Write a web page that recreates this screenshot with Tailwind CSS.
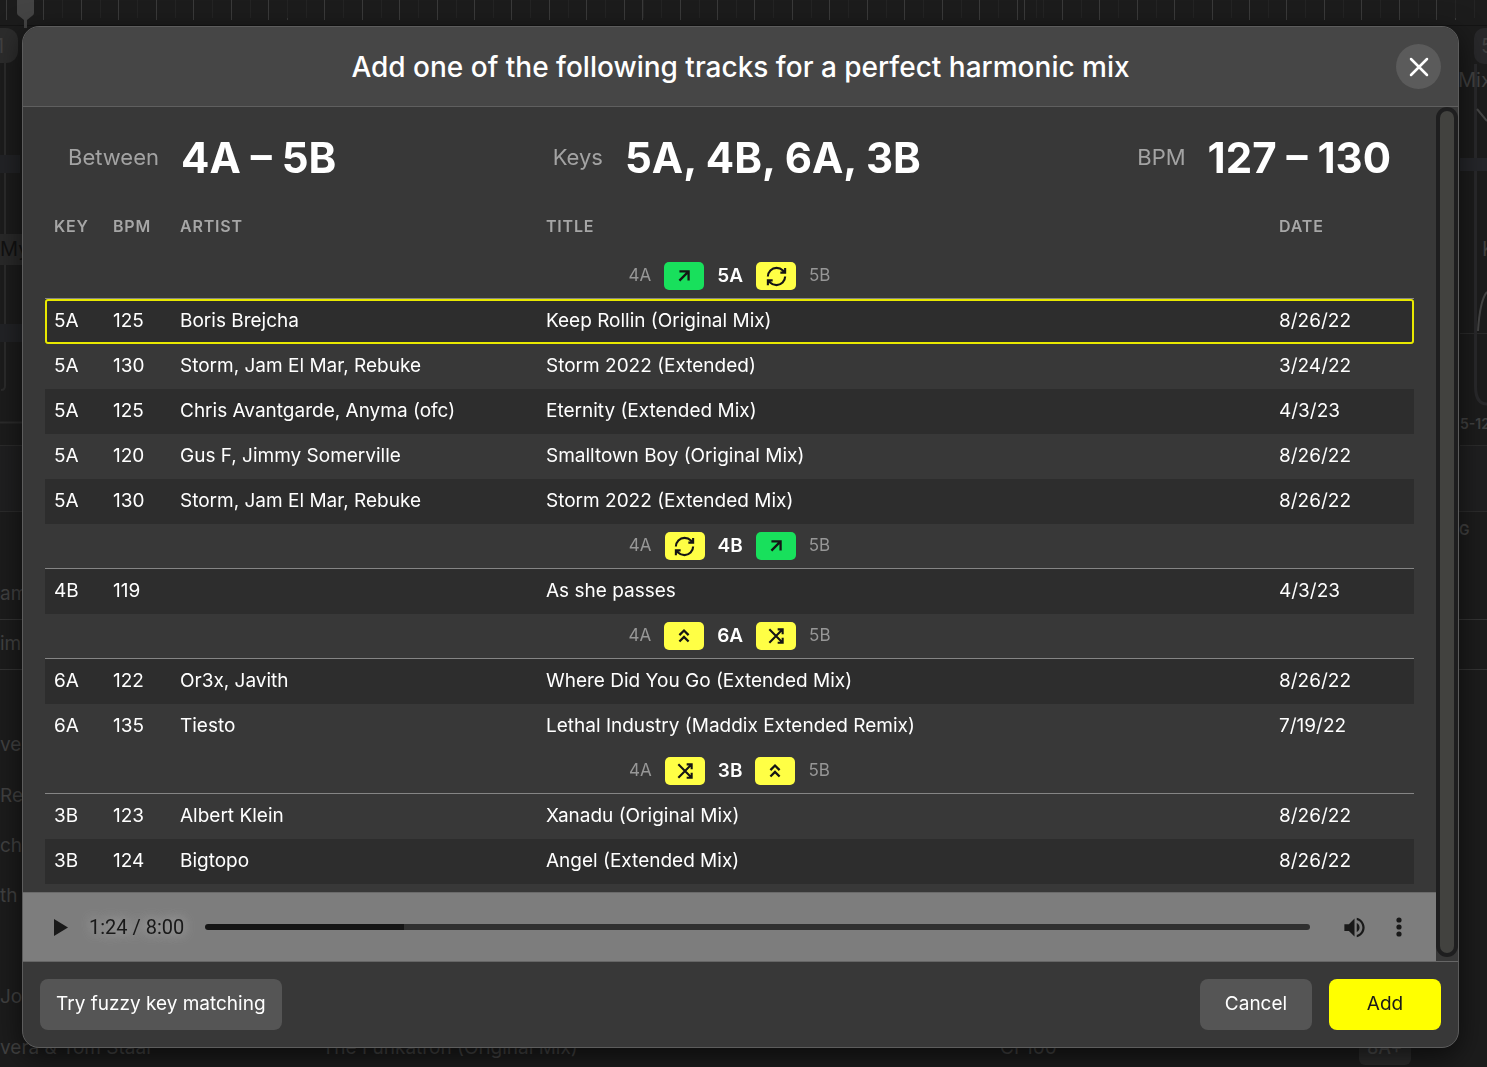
<!DOCTYPE html>
<html lang="en">

<head>
  <meta charset="UTF-8">
  <title>Harmonic mix</title>
  <script src="https://cdn.jsdelivr.net/npm/@tailwindcss/browser@4"></script>
</head>

<body class="h-screen overflow-hidden bg-[#1c1c1c] font-['Inter','Liberation_Sans',sans-serif] text-white">

  <!-- Icons -->
  <svg class="hidden">
    <symbol id="up" viewBox="0 0 24 24"><path d="M7 7h10v10M7 17 17 7" /></symbol>
    <symbol id="swap" viewBox="0 0 24 24"><path d="M3 12a9 9 0 0 1 9-9 9.75 9.75 0 0 1 6.74 2.74L21 8M21 3v5h-5M21 12a9 9 0 0 1-9 9 9.75 9.75 0 0 1-6.74-2.74L3 16M8 16H3v5" /></symbol>
    <symbol id="boost" viewBox="0 0 24 24"><path d="m17 11-5-5-5 5M17 18l-5-5-5 5" /></symbol>
    <symbol id="cross" viewBox="0 0 24 24"><path d="M14 4h6v6M4 20 20 4M20 14v6h-6M4 4l16 16" /></symbol>
  </svg>

  <!-- App behind the dialog -->
  <div class="flex h-screen flex-col overflow-hidden text-[#414141]" aria-hidden="true">
    <div class="relative h-[511px] shrink-0">
      <svg id="timeline" class="h-full w-full" fill="none">
        <path d="M0 25.500H1487" stroke="#141414" />
        <rect x="-20" y="28" width="38" height="35" rx="12" fill="#2c2c2c" />
        <path d="M5 62V386Q5 390 1 390M0 422.500H22" stroke="#2b2b2b" stroke-width="2" />
        <rect x="0" y="234" width="22" height="31" fill="#292929" />
        <path d="M0 155H20V173H0ZM0 324H22V342H0Z" fill="#222326" />
        <path d="M0 445.500H22M1460 445.500H1487M1460 333.500H1487" stroke="#2b2b2b" />
        <rect x="0" y="446" width="1487" height="65" fill="#1f1f20" />
        <rect x="1474" y="28" width="30" height="36" rx="10" fill="#28282a" />
        <path d="M1475.500 64V386Q1475.500 404 1487 404" stroke="#29292b" stroke-width="3" />
        <path d="M1460 158H1487V171H1460Z" fill="#25262a" />
        <path d="M1477 109 1487 121M1478 331Q1480 300 1487 292" stroke="#444" stroke-width="2" />
      </svg>
      <!-- Clip labels on the timeline -->
      <span class="absolute top-8 -left-1 text-xl">1</span>
      <span class="absolute top-[235px] left-0 text-xl text-[#111]">My</span>
      <span class="absolute top-8 left-[1481px] text-xl">5</span>
      <span class="absolute top-[66px] left-[1458px] text-xl">Mix</span>
      <span class="absolute top-[235px] left-[1482px] text-xl">K</span>
      <span class="absolute top-[414px] left-[1460px] text-sm font-semibold whitespace-nowrap">5-12</span>
    </div>
    <div class="flex h-[58px] shrink-0 items-start justify-end border-t border-[#2b2b2b] py-2 text-sm font-semibold"><span class="w-9 pl-2">G</span></div>
    <div id="library" class="grid h-[504px] shrink-0 grid-rows-10 text-[19px]"></div>
  </div>

  <!-- Dialog -->
  <div class="fixed inset-0 pt-[26px] pr-7 pb-[19px] pl-[22px]">
    <section role="dialog" aria-labelledby="dialog-title" class="flex h-full flex-col overflow-hidden rounded-[17px] border border-[#5c5c5c] bg-[#383838] shadow-[0_8px_28px_rgba(0,0,0,0.6)]">
      <header class="flex h-20 shrink-0 items-center border-b border-[#5f5f5f] bg-[#464646] px-[17px]">
        <div class="w-[45px]"></div>
        <h1 id="dialog-title" class="flex-1 pt-px text-center text-[28px] font-medium">Add one of the following tracks for a perfect harmonic mix</h1>
        <button aria-label="Close" class="flex size-[45px] items-center justify-center rounded-full bg-[#5b5b5b]">
          <svg class="size-[22px]" viewBox="0 0 22 22" stroke="#fff" stroke-width="2.500" stroke-linecap="round"><path d="M3 3 19 19M19 3 3 19" /></svg>
        </button>
      </header>

      <div class="flex min-h-0 flex-1">
        <main class="flex min-w-0 flex-1 flex-col">
          <!-- Summary -->
          <div class="flex h-[100px] shrink-0 items-center justify-between px-[45px]">
            <p class="flex items-center gap-[22px]"><span class="text-[22px] text-[#a3a3a3]">Between</span><b class="text-[42px]">4A – 5B</b></p>
            <p class="flex items-center gap-[22px]"><span class="text-[22px] text-[#a3a3a3]">Keys</span><b class="text-[42px]">5A, 4B, 6A, 3B</b></p>
            <p class="flex items-center gap-[22px]"><span class="text-[22px] text-[#a3a3a3]">BPM</span><b class="text-[42px]">127 – 130</b></p>
          </div>

          <!-- Tracks -->
          <div class="min-h-0 flex-1 overflow-hidden px-[22px]">
            <table class="w-full table-fixed border-separate border-spacing-0 text-left text-[19px] whitespace-nowrap">
              <thead class="text-base tracking-wider text-[#a6a6a6]">
                <tr class="h-[47px] align-top">
                  <th class="w-[59px] pt-[7px] pl-[9px] font-semibold">KEY</th>
                  <th class="w-[67px] pt-[7px] pl-[9px] font-semibold">BPM</th>
                  <th class="w-[366px] pt-[7px] pl-[9px] font-semibold">ARTIST</th>
                  <th class="pt-[7px] pl-[9px] font-semibold">TITLE</th>
                  <th class="w-[144px] pt-[7px] pl-[9px] font-semibold">DATE</th>
                </tr>
              </thead>
              <tbody id="tracks"></tbody>
            </table>
          </div>

          <!-- Player -->
          <div class="flex h-[69px] shrink-0 items-center border-t border-[#6a6a6a] bg-[#7d7d7d] pr-[26px] pl-[31px] text-[#191919]">
            <button aria-label="Play" class="w-[35px]">
              <svg class="h-[17px] w-[14px]" viewBox="0 0 14 17" fill="currentColor"><path d="M0 0 14 8.500 0 17Z" /></svg>
            </button>
            <span class="mr-[21px] font-[Roboto,sans-serif] text-xl [text-shadow:0_0_12px_#b0b0b0,0_0_12px_#a0a0a0]">1:24 / 8:00</span>
            <input type="range" aria-label="Position" value="18" class="h-[6px] min-w-0 flex-1 appearance-none rounded-full bg-[linear-gradient(to_right,#151515_18%,#303030_18%)] [&::-webkit-slider-thumb]:opacity-0">
            <button aria-label="Mute" class="ml-[31px]">
              <svg class="size-[27px]" viewBox="0 0 24 24" fill="currentColor"><path d="M3 9v6h4l5 5V4L7 9H3zm13.500 3c0-1.770-1.020-3.290-2.500-4.030v8.050c1.480-.73 2.500-2.250 2.500-4.020zM14 3.230v2.060c2.890.86 5 3.540 5 6.710s-2.110 5.850-5 6.710v2.060c4.010-.91 7-4.490 7-8.770s-2.990-7.860-7-8.770z" /></svg>
            </button>
            <button aria-label="More options" class="ml-5">
              <svg class="h-5 w-[22px]" viewBox="0 0 22 20" fill="currentColor"><circle cx="11" cy="3" r="2.600" /><circle cx="11" cy="10" r="2.600" /><circle cx="11" cy="17" r="2.600" /></svg>
            </button>
          </div>
        </main>

        <!-- Scrollbar -->
        <div class="w-[22px] pb-1">
          <div class="h-full rounded-full bg-[#1e1e1f] p-1"><div class="h-full rounded-full bg-[#42423f]"></div></div>
        </div>
      </div>

      <footer class="flex h-[86px] shrink-0 items-center gap-[17px] border-t border-[#666] px-[17px] text-[19px]">
        <button class="mr-auto h-[51px] rounded-lg bg-[#555] px-4">Try fuzzy key matching</button>
        <button class="h-[51px] w-28 rounded-lg bg-[#555]">Cancel</button>
        <button class="h-[51px] w-28 rounded-lg bg-[#ff0] text-[#1a1a1a]">Add</button>
      </footer>
    </section>
  </div>

  <script>
    const groups = [
      { key: '5A', icons: ['up', 'swap'], rows: [
        ['125', 'Boris Brejcha', 'Keep Rollin (Original Mix)', '8/26/22', 'selected'],
        ['130', 'Storm, Jam El Mar, Rebuke', 'Storm 2022 (Extended)', '3/24/22', 'plain'],
        ['125', 'Chris Avantgarde, Anyma (ofc)', 'Eternity (Extended Mix)', '4/3/23', 'dark'],
        ['120', 'Gus F, Jimmy Somerville', 'Smalltown Boy (Original Mix)', '8/26/22', 'plain'],
        ['130', 'Storm, Jam El Mar, Rebuke', 'Storm 2022 (Extended Mix)', '8/26/22', 'dark'],
      ] },
      { key: '4B', icons: ['swap', 'up'], rows: [
        ['119', '', 'As she passes', '4/3/23', 'dark'],
      ] },
      { key: '6A', icons: ['boost', 'cross'], rows: [
        ['122', 'Or3x, Javith', 'Where Did You Go (Extended Mix)', '8/26/22', 'dark'],
        ['135', 'Tiesto', 'Lethal Industry (Maddix Extended Remix)', '7/19/22', 'plain'],
      ] },
      { key: '3B', icons: ['cross', 'boost'], rows: [
        ['123', 'Albert Klein', 'Xanadu (Original Mix)', '8/26/22', 'plain'],
        ['124', 'Bigtopo', 'Angel (Extended Mix)', '8/26/22', 'dark'],
      ] },
    ];

    const rowStyle = {
      plain: 'h-[45px]',
      dark: 'h-[45px] bg-[#2d2d2d]',
      selected: 'h-[45px] bg-[#2d2d2d] rounded-[3px] outline-2 -outline-offset-2 outline-[#e8e800]',
    };
    const iconStyle = {
      up: 'size-[22px] stroke-[2.5]',
      swap: 'size-[23px] stroke-[2.2]',
      boost: 'size-[22px] stroke-[2.5]',
      cross: 'size-5 stroke-[2.5]',
    };

    function chip(icon) {
      const color = icon === 'up' ? 'bg-[#18e05c]' : 'bg-[#ffff45]';
      return `<span class="flex h-7 w-10 items-center justify-center rounded-[5px] ${color}">
        <svg class="${iconStyle[icon]}" fill="none" stroke="#151515"><use href="#${icon}" /></svg></span>`;
    }

    document.getElementById('tracks').innerHTML = groups.map(g => `
      <tr class="h-[45px]"><td colspan="5" class="border-b border-[#858585]">
        <div class="flex items-center justify-center gap-[13px] text-[#979797]">
          <span class="text-[17px]">4A</span>${chip(g.icons[0])}
          <b class="font-semibold text-white">${g.key}</b>
          ${chip(g.icons[1])}<span class="text-[17px]">5B</span>
        </div></td></tr>` +
      g.rows.map(([bpm, artist, title, date, style]) => `
      <tr class="${rowStyle[style]}">${[g.key, bpm, artist, title, date].map(t => `<td class="pl-[9px]">${t}</td>`).join('')}</tr>`).join('')
    ).join('');

    // Library rows
    const library = [['amm'], ['im'], [''], ['ve'], ['Re'], ['cha'], ['th'], [''], ['Jon'], ['vera & Tom Staal', 'The Funkatron (Original Mix)', 'CF100', '8A+']];
    document.getElementById('library').innerHTML = library.map(([artist, title = '', label = '', key = ''], i) => `
      <div class="flex items-center whitespace-nowrap ${i === 1 ? 'border-y border-[#333]' : ''}"><span class="w-[322px]">${artist}</span><span class="w-[678px]">${title}</span><span class="w-[359px]">${label}</span>
      ${key && `<span class="rounded-md bg-[#2b2b2b] px-2 py-[3px] text-lg font-medium text-[#4a4a4a]">${key}</span>`}</div>`).join('');

    // Beat ruler
    const beats = [6, 43, 81, 118, 156, 193, 231, 268, 287, 324, 362, 399, 437, 474, 511, 549, 586, 624, 642, 680, 717, 754, 792, 829, 867, 904, 942, 979, 1017, 1024, 1062, 1099, 1137, 1174, 1212, 1249, 1286, 1324, 1361, 1399, 1436, 1455];
    document.getElementById('timeline').insertAdjacentHTML('beforeend',
      `<path d="${beats.map(x => `M${x}.5 0V20`).join('')}" stroke="#3a3a3a" />
       <path d="${beats.map(x => `M${x + 19}.5 0V18`).join('')}" stroke="#242424" />
       <path d="M17 0H34V13Q34 15 32 16L27 20V28H24V20L19 16Q17 15 17 13Z" fill="#444" />`);
  </script>
</body>

</html>
